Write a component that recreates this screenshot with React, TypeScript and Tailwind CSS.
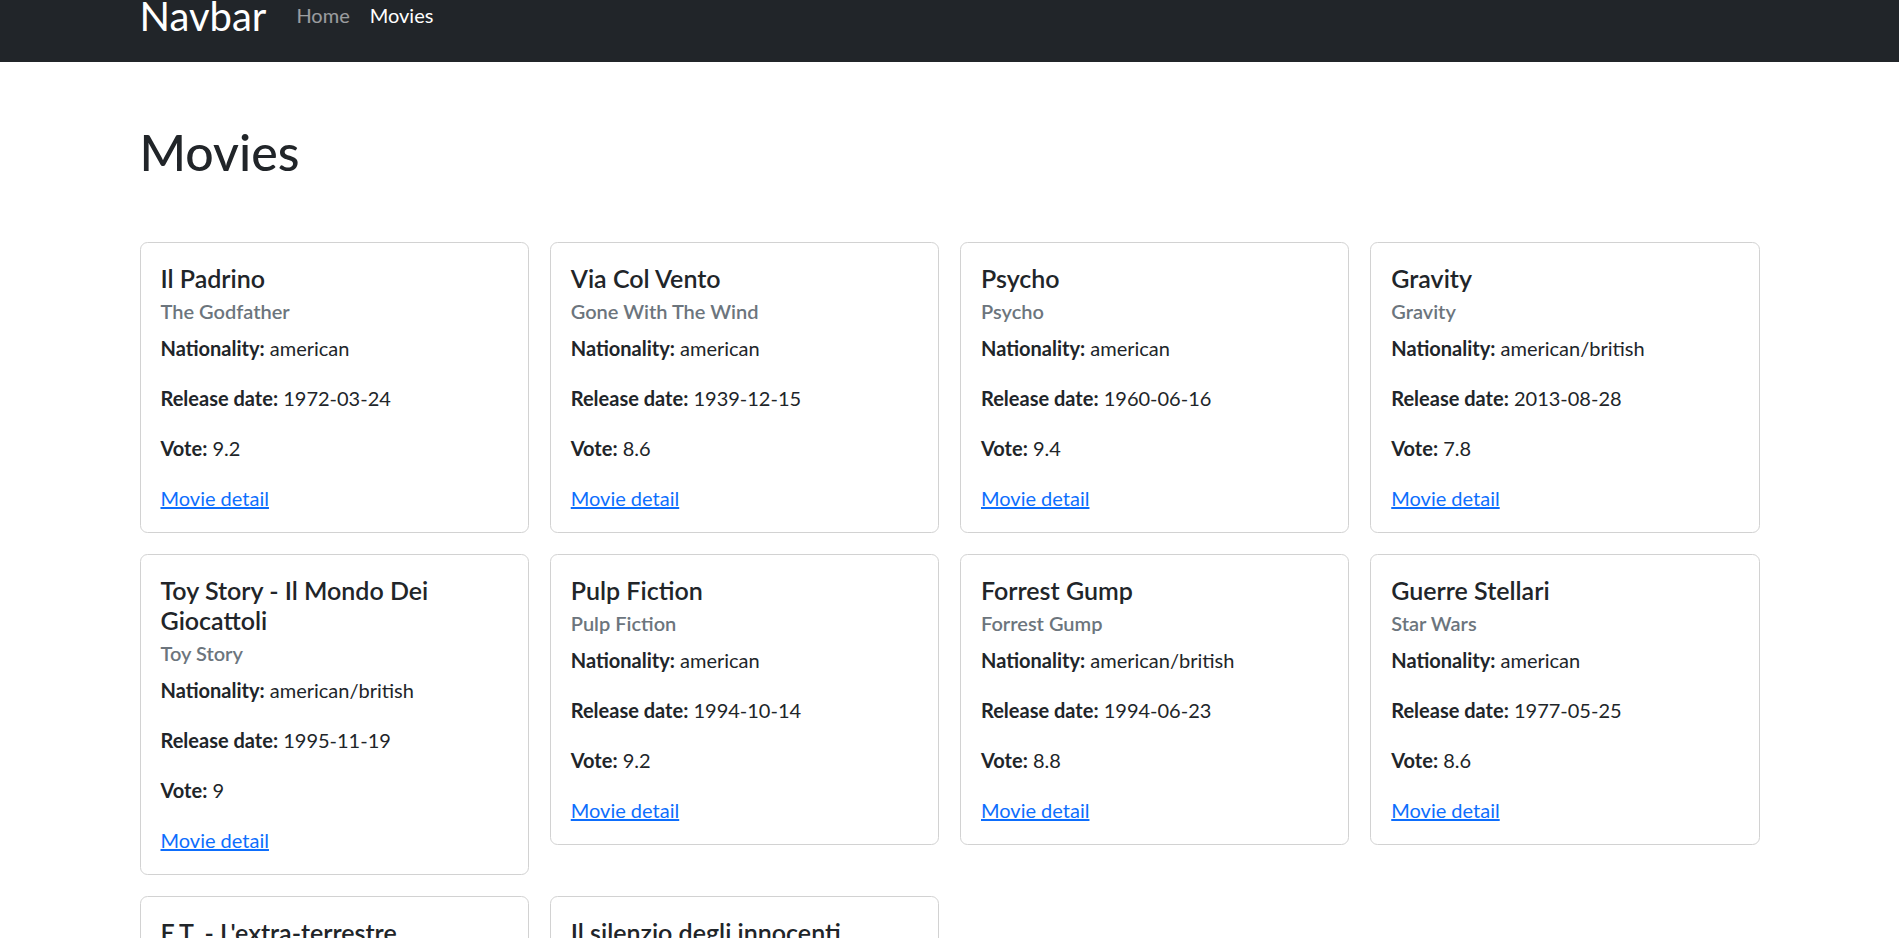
import React from "react";

type Movie = {
  title: string;
  original: string;
  nationality: string;
  date: string;
  vote: string;
};

const movies: Movie[] = [
  { title: "Il Padrino", original: "The Godfather", nationality: "american", date: "1972-03-24", vote: "9.2" },
  { title: "Via Col Vento", original: "Gone With The Wind", nationality: "american", date: "1939-12-15", vote: "8.6" },
  { title: "Psycho", original: "Psycho", nationality: "american", date: "1960-06-16", vote: "9.4" },
  { title: "Gravity", original: "Gravity", nationality: "american/british", date: "2013-08-28", vote: "7.8" },
  { title: "Toy Story - Il Mondo Dei Giocattoli", original: "Toy Story", nationality: "american/british", date: "1995-11-19", vote: "9" },
  { title: "Pulp Fiction", original: "Pulp Fiction", nationality: "american", date: "1994-10-14", vote: "9.2" },
  { title: "Forrest Gump", original: "Forrest Gump", nationality: "american/british", date: "1994-06-23", vote: "8.8" },
  { title: "Guerre Stellari", original: "Star Wars", nationality: "american", date: "1977-05-25", vote: "8.6" },
  { title: "E.T. - L'extra-terrestre", original: "E.T. the Extra-Terrestrial", nationality: "american", date: "1982-06-11", vote: "8.1" },
  { title: "Il silenzio degli innocenti", original: "The Silence of the Lambs", nationality: "american", date: "1991-02-14", vote: "8.6" },
];

const MovieCard = ({ movie }: { movie: Movie }) => {
  return (
    <div className="rounded-[7.5px] border border-[#d2d2d2] bg-white px-[20px] pt-[20px] pb-[19px]">
      <h5 className="text-[25px] leading-[30px] font-semibold">{movie.title}</h5>
      <h6 className="mt-[6px] mb-[10px] text-[20px] leading-[24px] font-semibold text-[#6c757d]">
        {movie.original}
      </h6>
      <p className="mb-[20px]">
        <strong className="font-bold">Nationality:</strong> {movie.nationality}
      </p>
      <p className="mb-[20px]">
        <strong className="font-bold">Release date:</strong> {movie.date}
      </p>
      <p className="mb-[20px]">
        <strong className="font-bold">Vote:</strong> {movie.vote}
      </p>
      <p>
        <a href="#" className="text-[#0d6efd] underline">
          Movie detail
        </a>
      </p>
    </div>
  );
};

const App = () => {
  return (
    <div className="min-h-screen bg-white font-['Lato','Segoe_UI',sans-serif] text-[20px] leading-[30px] text-[#212529]">
      <nav className="h-[62px] bg-[#212529]">
        <div className="mx-auto flex w-[1620px] items-start">
          <a href="#" className="-mt-[4px] mr-[20px] text-[40px] leading-[40px] text-white">
            Navbar
          </a>
          <a href="#" className="px-[10px] text-[20px] leading-[30px] text-white/55">
            Home
          </a>
          <a href="#" className="px-[10px] text-[20px] leading-[30px] text-white">
            Movies
          </a>
        </div>
      </nav>
      <main className="mx-auto w-[1620px]">
        <h1 className="my-[60px] text-[50px] leading-[60px] font-medium">Movies</h1>
        <div className="grid grid-cols-4 items-start gap-[21px] pb-[40px]">
          {movies.map((m) => (
            <MovieCard key={m.title} movie={m} />
          ))}
        </div>
      </main>
    </div>
  );
};

export default App;
